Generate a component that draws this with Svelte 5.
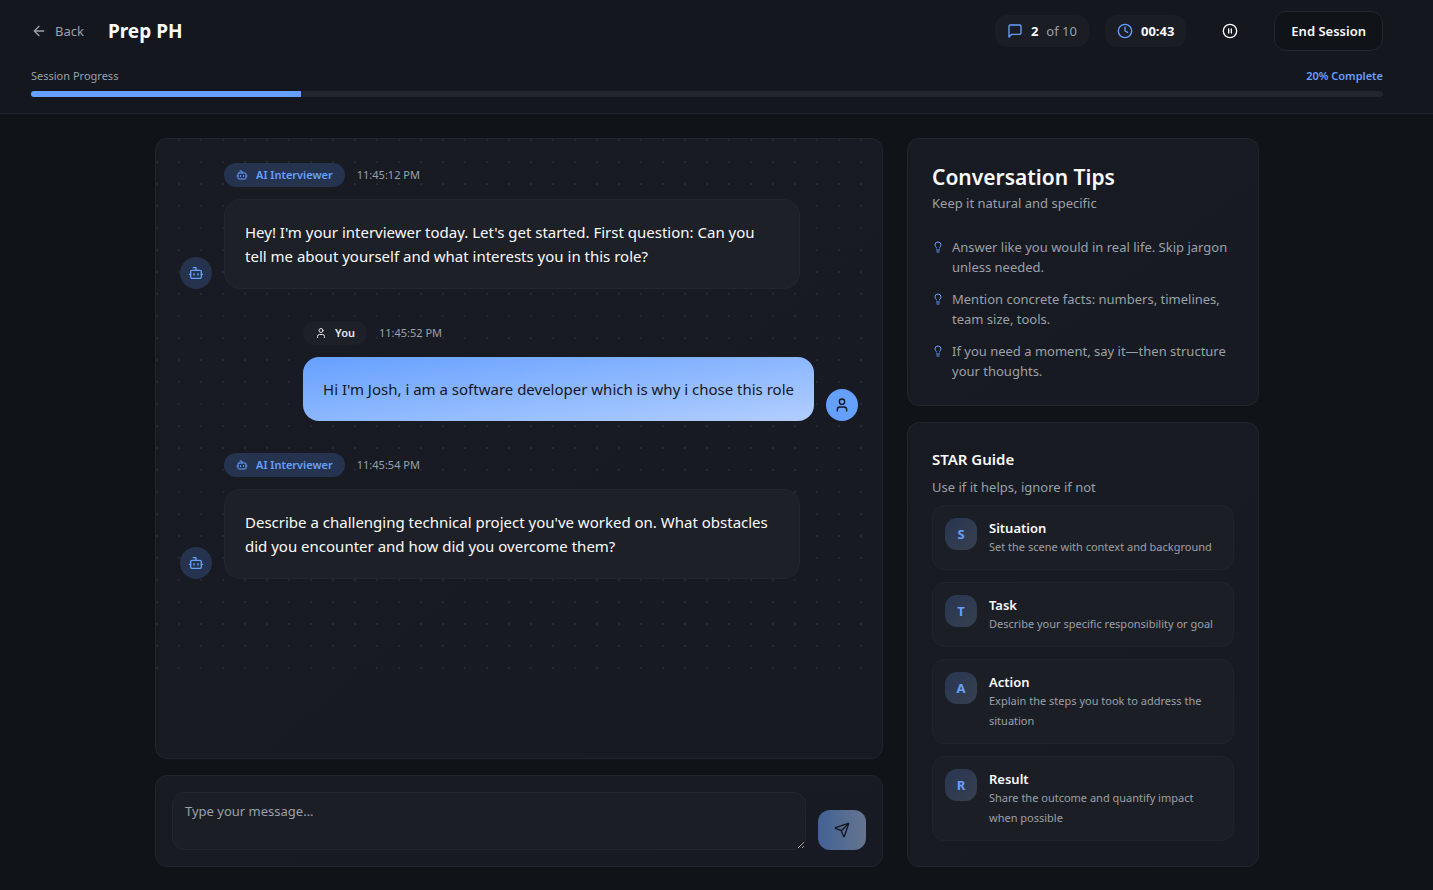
<script>
  const messages = [
    { from: 'ai', time: '11:45:12 PM', text: "Hey! I'm your interviewer today. Let's get started. First question: Can you tell me about yourself and what interests you in this role?" },
    { from: 'user', time: '11:45:52 PM', text: "Hi I'm Josh, i am a software developer which is why i chose this role" },
    { from: 'ai', time: '11:45:54 PM', text: "Describe a challenging technical project you've worked on. What obstacles did you encounter and how did you overcome them?" }
  ];
  const tips = [
    'Answer like you would in real life. Skip jargon unless needed.',
    'Mention concrete facts: numbers, timelines, team size, tools.',
    'If you need a moment, say it—then structure your thoughts.'
  ];
  const star = [
    { name: 'Situation', text: 'Set the scene with context and background' },
    { name: 'Task', text: 'Describe your specific responsibility or goal' },
    { name: 'Action', text: 'Explain the steps you took to address the situation' },
    { name: 'Result', text: 'Share the outcome and quantify impact when possible' }
  ];
  const current = 2;
  const total = 10;
  const percent = (current / total) * 100;
  let draft = $state('');
</script>

{#snippet icon(name, size)}
  <svg width={size} height={size} viewBox="0 0 24 24" fill="none" stroke="currentColor" stroke-width="2" stroke-linecap="round" stroke-linejoin="round" aria-hidden="true">
    {#if name === 'bot'}
      <path d="M12 8V4H8" /><rect width="16" height="12" x="4" y="8" rx="2" /><path d="M2 14h2M20 14h2M15 13v2M9 13v2" />
    {:else if name === 'user'}
      <path d="M19 21v-2a4 4 0 0 0-4-4H9a4 4 0 0 0-4 4v2" /><circle cx="12" cy="7" r="4" />
    {:else if name === 'back'}
      <path d="m12 19-7-7 7-7M19 12H5" />
    {:else if name === 'message'}
      <path d="M21 15a2 2 0 0 1-2 2H7l-4 4V5a2 2 0 0 1 2-2h14a2 2 0 0 1 2 2z" />
    {:else if name === 'clock'}
      <circle cx="12" cy="12" r="10" /><path d="M12 6v6l4 2" />
    {:else if name === 'pause'}
      <circle cx="12" cy="12" r="10" /><path d="M10 15V9M14 15V9" />
    {:else if name === 'bulb'}
      <path d="M15 14c.2-1 .7-1.7 1.5-2.5 1-.9 1.5-2.2 1.5-3.5A6 6 0 0 0 6 8c0 1 .2 2.2 1.5 3.5.7.7 1.3 1.5 1.5 2.5M9 18h6M10 22h4" />
    {:else if name === 'send'}
      <path d="M14.536 21.686a.5.5 0 0 0 .937-.024l6.5-19a.496.496 0 0 0-.635-.635l-19 6.5a.5.5 0 0 0-.024.937l7.93 3.18a2 2 0 0 1 1.112 1.11zM21.854 2.147l-10.94 10.939" />
    {/if}
  </svg>
{/snippet}

<div class="page">
  <header>
    <div class="bar">
      <button class="back">{@render icon('back', 16)}Back</button>
      <h1>Prep PH</h1>
      <div class="status">
        <div class="chip"><span class="blue">{@render icon('message', 16)}</span><b>{current}</b><span class="muted">of {total}</span></div>
        <div class="chip"><span class="blue">{@render icon('clock', 16)}</span><b>00:43</b></div>
        <button class="pause" aria-label="Pause session">{@render icon('pause', 16)}</button>
        <button class="end">End Session</button>
      </div>
    </div>
    <div class="labels"><span id="progress-label">Session Progress</span><span class="complete">{percent}% Complete</span></div>
    <div class="track" role="progressbar" aria-labelledby="progress-label" aria-valuenow={percent}>
      <div class="fill" style="width: {percent}%"></div>
    </div>
  </header>

  <main>
    <div class="column">
      <section class="card chat">
        <div class="thread">
          {#each messages as m}
            <article class={m.from}>
              <div class="avatar">{@render icon(m.from === 'ai' ? 'bot' : 'user', 16)}</div>
              <div class="body">
                <div class="meta">
                  <span class="badge">{@render icon(m.from === 'ai' ? 'bot' : 'user', 12)}{m.from === 'ai' ? 'AI Interviewer' : 'You'}</span>
                  <time>{m.time}</time>
                </div>
                <p class="bubble">{m.text}</p>
              </div>
            </article>
          {/each}
        </div>
      </section>
      <form class="card composer" onsubmit={(e) => e.preventDefault()}>
        <textarea aria-label="Message" placeholder="Type your message..." bind:value={draft}></textarea>
        <button class="send" aria-label="Send message">{@render icon('send', 16)}</button>
      </form>
    </div>

    <aside class="column">
      <section class="card tips">
        <h2>Conversation Tips</h2>
        <p class="sub">Keep it natural and specific</p>
        <ul>
          {#each tips as tip}
            <li><span class="bulb">{@render icon('bulb', 12)}</span>{tip}</li>
          {/each}
        </ul>
      </section>
      <section class="card guide">
        <h3>STAR Guide</h3>
        <p class="sub">Use if it helps, ignore if not</p>
        <div class="steps">
          {#each star as s}
            <div class="step">
              <div class="letter">{s.name[0]}</div>
              <div><h4>{s.name}</h4><p>{s.text}</p></div>
            </div>
          {/each}
        </div>
      </section>
    </aside>
  </main>
</div>

<style>
  :global(body) { margin: 0; background: #101317; }
  .page {
    --blue: #65a0ff;
    --muted: #9ba0a9;
    --line: #22252d;
    display: flex;
    flex-direction: column;
    box-sizing: border-box;
    min-height: 100vh;
    font-family: "Segoe UI", "Noto Sans", "Open Sans", sans-serif;
    font-size: 13px;
    line-height: 20px;
    color: #fafafa;
  }
  .page :global(*) { box-sizing: border-box; }
  h1, h2, h3, h4, p, ul { margin: 0; padding: 0; }
  svg { display: block; flex: none; }
  button { font: inherit; color: inherit; border: 0; background: none; padding: 0; cursor: pointer; }
  .blue { color: var(--blue); }
  .muted { color: var(--muted); }

  header { padding: 11px 50px 16px 31px; background: #14171e; border-bottom: 1px solid var(--line); }
  .bar { display: flex; align-items: center; height: 40px; }
  .back { display: flex; align-items: center; gap: 8px; color: var(--muted); }
  h1 { margin-left: 24px; font-size: 19px; line-height: 28px; font-weight: 700; }
  .status { margin-left: auto; display: flex; align-items: center; gap: 16px; }
  .chip { display: flex; align-items: center; gap: 8px; height: 32px; padding: 0 12px; border-radius: 12px; background: #1a1d24; }
  .chip b { font-weight: 700; }
  .pause { display: grid; place-items: center; width: 56px; height: 36px; }
  .end { height: 40px; padding: 0 16px; border: 1px solid var(--line); border-radius: 12px; background: #101317; font-weight: 600; }
  .labels { display: flex; justify-content: space-between; margin-top: 17px; font-size: 11px; line-height: 16px; color: var(--muted); }
  .complete { color: var(--blue); font-weight: 600; }
  .track { margin-top: 7px; height: 6px; border-radius: 3px; background: #22252c; overflow: hidden; }
  .fill { height: 100%; background: var(--blue); }

  main { flex: 1; display: grid; grid-template-columns: minmax(0, 728fr) minmax(0, 352fr); gap: 24px; width: calc(100% - 19px); max-width: 1152px; padding: 24px 24px 23px; margin: 0 auto; }
  @media (min-width: 1171px) {
    main { margin-left: calc((100% - 1171px) / 2); }
  }
  .column { display: flex; flex-direction: column; gap: 16px; }
  .card { border: 1px solid var(--line); border-radius: 12px; background: linear-gradient(to bottom right, #181b22, #171a22); }

  .chat { flex: 1; overflow: hidden; }
  .thread { display: flex; flex-direction: column; gap: 32px; padding: 24px 24px 96px; background: radial-gradient(circle at 1px 1px, #262931 1px, transparent 1px) 0 0 / 22px 22px; }
  article { display: flex; align-items: flex-end; gap: 12px; }
  article.user { flex-direction: row-reverse; }
  .avatar { display: grid; place-items: center; flex: none; width: 32px; height: 32px; border-radius: 50%; background: #25334e; color: var(--blue); }
  .user .avatar { background: var(--blue); color: #14171e; }
  .body { max-width: 576px; }
  .meta { display: flex; align-items: center; gap: 12px; margin-bottom: 12px; font-size: 11px; color: var(--muted); }
  .badge { display: flex; align-items: center; gap: 8px; height: 24px; padding: 0 12px; border-radius: 12px; background: #25334e; color: var(--blue); font-weight: 600; }
  .user .badge { background: #1d2027; color: #e6e8eb; }
  .bubble { padding: 20px; border: 1px solid #23262e; border-radius: 16px; background: #1d2027; font-size: 15px; line-height: 24px; }
  .user .bubble { border: 0; background: linear-gradient(to bottom right, #65a0ff, #b2ceff); color: #14171e; }

  .composer { display: flex; align-items: flex-end; gap: 12px; padding: 16px; }
  textarea { flex: 1; min-width: 0; height: 58px; padding: 8px 12px; border: 1px solid #23262e; border-radius: 12px; background: #1b1e25; font: inherit; color: inherit; resize: vertical; outline: none; }
  textarea::placeholder { color: var(--muted); opacity: 1; }
  .send { display: grid; place-items: center; width: 48px; height: 40px; border-radius: 12px; background: linear-gradient(90deg, #416196, #66758f); color: #14171e; }

  .tips, .guide { padding: 24px; }
  .guide { flex: 1; }
  h2 { margin-bottom: 2px; font-size: 21px; line-height: 28px; font-weight: 600; }
  .sub { color: var(--muted); }
  ul { display: grid; gap: 12px; margin-top: 24px; list-style: none; }
  li { display: flex; gap: 8px; color: var(--muted); }
  .bulb { margin-top: 4px; color: var(--blue); }
  h3 { margin-bottom: 6px; font-size: 15px; line-height: 24px; font-weight: 600; }
  .steps { display: grid; gap: 12px; margin-top: 8px; }
  .step { display: flex; gap: 12px; padding: 12px; border: 1px solid #20232b; border-radius: 12px; background: #1b1e25; }
  .letter { display: grid; place-items: center; flex: none; width: 32px; height: 32px; border-radius: 12px; background: linear-gradient(135deg, #283653, #38404f); color: var(--blue); font-weight: 700; }
  h4 { font-size: 13px; line-height: 20px; font-weight: 600; }
  .step p { font-size: 11px; line-height: 20px; color: var(--muted); }
  .step h4 { margin-bottom: -1px; }
</style>
